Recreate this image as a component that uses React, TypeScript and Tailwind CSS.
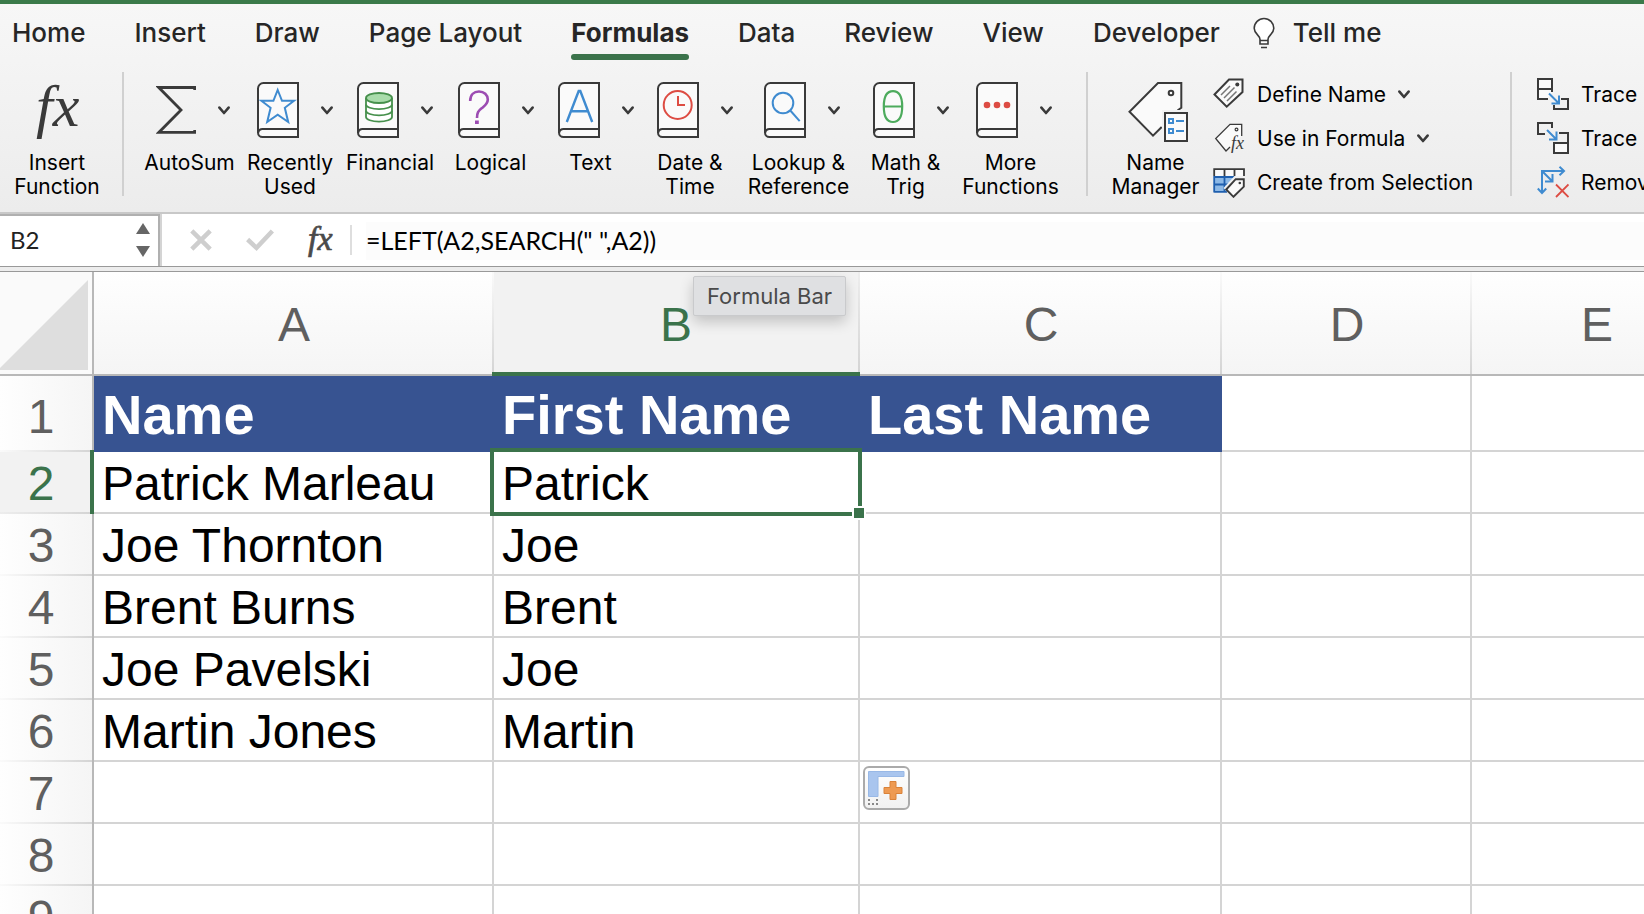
import type { ReactNode } from "react";

const tabs = ["Home", "Insert", "Draw", "Page Layout", "Formulas", "Data", "Review", "View", "Developer"];

function Chevron() {
  return (
    <svg width="12" height="9" viewBox="0 0 12 9" fill="none" stroke="#3a3a3a" strokeWidth="2.6" strokeLinecap="round" strokeLinejoin="round">
      <path d="M1.4 1.6 6 7 10.6 1.6" />
    </svg>
  );
}

function Book({ children }: { children: ReactNode }) {
  return (
    <svg width="42" height="56" viewBox="0 0 42 56" fill="none">
      <path d="M6.5 1H41V55H5.5A4.5 4.5 0 0 1 1 50.5V6.5A5.5 5.5 0 0 1 6.5 1Z" fill="#fafafa" stroke="#3a3a3a" strokeWidth="2" />
      <path d="M41 47H5.500A4.300 4.300 0 0 0 1.300 50.500" stroke="#3a3a3a" strokeWidth="2" />
      {children}
    </svg>
  );
}

const sigmaIcon = (
  <svg width="40" height="56" viewBox="0 0 40 56" fill="none" stroke="#3a3a3a" strokeWidth="2.8">
    <path d="M38.7 8V5.5H2.8L25 28 2.8 50.4H38.7V48" />
  </svg>
);

const starIcon = (
  <Book>
    <path d="M20.7 8 25 18.8H37L27.8 25.8 31.2 40 20.7 32.6 10.2 40 13.6 25.8 4.4 18.8H16.4Z" stroke="#3f8bd0" strokeWidth="2" />
  </Book>
);

const coinsIcon = (
  <Book>
    <path d="M9 16V35c0 2.600 5.800 4.600 13 4.600s13-2 13-4.600V16" fill="#fff" stroke="#46904c" strokeWidth="1.8" />
    <ellipse cx="22" cy="16" rx="13" ry="5" fill="#a9dcab" stroke="#46904c" strokeWidth="1.8" />
    <path d="M9 22.500c0 2.600 5.800 4.600 13 4.600s13-2 13-4.600M9 28.700c0 2.600 5.800 4.600 13 4.600s13-2 13-4.600" stroke="#46904c" strokeWidth="1.8" />
  </Book>
);

const questionIcon = (
  <Book>
    <path d="M12.200 19C12.200 12.500 16 9.500 21 9.500S29.800 12.800 29.800 17.600C29.800 22 27 23.500 23.600 26.300 20.300 29 19 30.500 19 36" stroke="#9c4cb2" strokeWidth="2.600" />
    <rect x="17" y="38.500" width="3.800" height="3.500" fill="#9c4cb2" />
  </Book>
);

const letterIcon = (
  <Book>
    <path d="M8.800 40 20.700 9H22.300L34.200 40M12.800 29.300H30.200" stroke="#3f8bd0" strokeWidth="2.400" />
  </Book>
);

const clockIcon = (
  <Book>
    <circle cx="20.700" cy="23" r="14" stroke="#dd4c43" strokeWidth="2" />
    <path d="M21 14V23H28" stroke="#dd4c43" strokeWidth="2" />
  </Book>
);

const lookupIcon = (
  <Book>
    <circle cx="19" cy="21" r="10.300" stroke="#3f8bd0" strokeWidth="2" />
    <path d="M26.300 28.500 35.700 39.200" stroke="#3f8bd0" strokeWidth="2" />
  </Book>
);

const thetaIcon = (
  <Book>
    <path d="M20 9.200C14.500 9.200 10.800 13.500 10.800 24.500S14.500 40 20 40 29.200 35.500 29.200 24.500 25.500 9.200 20 9.200ZM10.800 24.500H29.200" stroke="#4dab5d" strokeWidth="2.200" />
  </Book>
);

const dotsIcon = (
  <Book>
    <g fill="#dd4c43">
      <circle cx="11" cy="23" r="3.300" />
      <circle cx="21" cy="23" r="3.300" />
      <circle cx="31" cy="23" r="3.300" />
    </g>
  </Book>
);

const functionItems = [
  { lines: ["AutoSum"], width: "w-[101px]", pad: "pl-1.5", icon: sigmaIcon },
  { lines: ["Recently", "Used"], width: "w-[100px]", pad: "pl-[10px]", icon: starIcon },
  { lines: ["Financial"], width: "w-[100px]", pad: "pl-[10px]", icon: coinsIcon },
  { lines: ["Logical"], width: "w-[101px]", pad: "pl-[10px]", icon: questionIcon },
  { lines: ["Text"], width: "w-[99px]", pad: "pl-[10px]", icon: letterIcon },
  { lines: ["Date &", "Time"], width: "w-[100px]", pad: "pl-[10px]", icon: clockIcon },
  { lines: ["Lookup &", "Reference"], width: "w-[117px]", pad: "pl-1.5", icon: lookupIcon },
  { lines: ["Math &", "Trig"], width: "w-[97px]", pad: "pl-[10px]", icon: thetaIcon },
  { lines: ["More", "Functions"], width: "w-[113px]", pad: "pl-1.5", icon: dotsIcon },
];

function Label({ lines }: { lines: string[] }) {
  return (
    <span className="block h-12 text-center text-[21px] leading-6 whitespace-nowrap">
      {lines.map((line) => (
        <span key={line} className="block">
          {line}
        </span>
      ))}
    </span>
  );
}

function Divider() {
  return <div className="h-[124px] w-0.5 shrink-0 bg-[#d0d0d0]" />;
}

const nameManagerIcon = (
  <svg width="60" height="60" viewBox="0 0 60 60" fill="none">
    <path d="M1.500 29.700 30 1H53.300V29L25 53.500Z" fill="#fafafa" />
    <path d="M49.500 28.500 53.300 25.800V1H30L1.500 29.700 25 53.700 33.700 45" stroke="#3a3a3a" strokeWidth="2" />
    <circle cx="43" cy="11" r="2.300" stroke="#3a3a3a" strokeWidth="2" />
    <rect x="34" y="28" width="26" height="32" fill="#f1f1f1" />
    <rect x="37" y="31" width="22" height="28" fill="#fafafa" stroke="#3a3a3a" strokeWidth="2" />
    <path d="M41 37h4v4h-4zM41 47h4v4h-4zM48 39h8M48 49h8" stroke="#3f8bd0" strokeWidth="2" />
  </svg>
);

const defineNameIcon = (
  <svg width="32" height="32" viewBox="0 0 32 32" fill="none">
    <path d="M1.500 16.500 16 1.500H29.500V14L13.700 28.700Z" fill="#fafafa" stroke="#3a3a3a" strokeWidth="2" />
    <circle cx="24.300" cy="6.500" r="2" fill="#3a3a3a" />
    <path d="M8 17 17 8M11 20 21.500 9.500M14 23 23.500 13.500" stroke="#777" strokeWidth="1.500" />
  </svg>
);

const useInFormulaIcon = (
  <svg width="32" height="32" viewBox="0 0 32 32" fill="none">
    <path d="M28.700 14V2.300H17L2.700 16.500 13 29 17 25" fill="#fafafa" stroke="#3a3a3a" strokeWidth="1.300" />
    <circle cx="23.500" cy="7.500" r="1.400" stroke="#3a3a3a" strokeWidth="1.200" />
    <text x="18" y="27" fontFamily="Liberation Serif, serif" fontStyle="italic" fontSize="18" fill="#3a3a3a">
      fx
    </text>
  </svg>
);

const createIcon = (
  <svg width="32" height="32" viewBox="0 0 32 32" fill="none">
    <rect x="1" y="3" width="30" height="8" fill="#fafafa" />
    <rect x="1" y="11" width="22" height="15" fill="#8db9e6" />
    <path d="M1.200 11H24M1.200 18.500H16M1.200 25.800H14M1.200 10V26.500M11.500 10V26" stroke="#1f5fae" strokeWidth="1.800" />
    <path d="M1.200 10V3.200H31V10M11.500 3V10M21.500 3V10" stroke="#3a3a3a" strokeWidth="1.800" />
    <path d="M10.500 22 21.500 10H32V22L20 32Z" fill="#f1f1f1" />
    <path d="M13.200 23.500 22.700 13.200H30.800V20.700L20.500 30.800Z" fill="#fafafa" stroke="#3a3a3a" strokeWidth="1.900" />
    <circle cx="26.800" cy="17" r="1.300" fill="#3a3a3a" />
  </svg>
);

const precedentsIcon = (
  <svg width="32" height="32" viewBox="0 0 32 32" fill="none" strokeWidth="2">
    <path d="M1 1H15V15L11 20H1Z" fill="#fafafa" />
    <path d="M11 21H1V1H15V14M1 11H15M24 21H31V31H17V27" stroke="#3a3a3a" />
    <path d="M12 15.500 21.500 25M22 17.500V25.500H14.500" stroke="#3f8bd0" />
  </svg>
);

const dependentsIcon = (
  <svg width="32" height="32" viewBox="0 0 32 32" fill="none" strokeWidth="2">
    <path d="M17 21H31V31H17Z" fill="#fafafa" />
    <path d="M8 12H1V1H15V6M22 11H31V31H17V21H31" stroke="#3a3a3a" />
    <path d="M10 8 19 17M19.500 9.500V17.500H12" stroke="#3f8bd0" />
  </svg>
);

const removeIcon = (
  <svg width="32" height="32" viewBox="0 0 32 32" fill="none" strokeWidth="2">
    <path d="M5 27V5H27M22.500 .8 27 5 22.500 9.200M.8 22.500 5 27 9.200 22.500M6 6 15 15M15.500 8V15.500H8" stroke="#3f8bd0" />
    <path d="M19 18.500 31.500 31M31.500 18.500 19 31" stroke="#dd4c43" strokeWidth="1.800" />
  </svg>
);

function SmallItem({ icon, label, menu }: { icon: ReactNode; label: string; menu?: boolean }) {
  return (
    <button type="button" className="flex h-11 items-center gap-3 text-[21px] leading-6 whitespace-nowrap">
      {icon}
      <span className="pt-0.5">{label}</span>
      {menu && <Chevron />}
    </button>
  );
}

function Ribbon() {
  return (
    <div className="flex h-[140px] overflow-hidden text-black">
      <button type="button" className="flex w-[122px] shrink-0 flex-col items-center gap-[13px] pt-[10px] pr-[8px]">
        <svg width="56" height="56" viewBox="0 0 56 56" className="overflow-visible">
          <text x="7" y="44" fontFamily="Liberation Serif, serif" fontStyle="italic" fontSize="60" fill="#3a3a3a">
            fx
          </text>
        </svg>
        <Label lines={["Insert", "Function"]} />
      </button>
      <Divider />
      <div className="flex shrink-0 pr-[19px] pl-[15px]">
        {functionItems.map((item) => (
          <button key={item.lines[0]} type="button" className={`flex shrink-0 flex-col items-center gap-[13px] pt-[10px] ${item.width}`}>
            <span className={`flex items-center gap-[22px] ${item.pad}`}>
              {item.icon}
              <Chevron />
            </span>
            <Label lines={item.lines} />
          </button>
        ))}
      </div>
      <Divider />
      <button type="button" className="flex w-[125px] shrink-0 flex-col items-center gap-[13px] pt-[10px] pl-[10px]">
        <span className="flex h-14 items-start pl-1">{nameManagerIcon}</span>
        <Label lines={["Name", "Manager"]} />
      </button>
      <div className="flex w-[297px] shrink-0 flex-col items-start">
        <SmallItem icon={defineNameIcon} label="Define Name" menu />
        <SmallItem icon={useInFormulaIcon} label="Use in Formula" menu />
        <SmallItem icon={createIcon} label="Create from Selection" />
      </div>
      <Divider />
      <div className="flex shrink-0 flex-col items-start pl-[25px]">
        <SmallItem icon={precedentsIcon} label="Trace" />
        <SmallItem icon={dependentsIcon} label="Trace" />
        <SmallItem icon={removeIcon} label="Remove" />
      </div>
    </div>
  );
}

function Tabs() {
  return (
    <nav className="flex items-start gap-[49px] pt-[13px] pb-3 pl-3 text-[26px] leading-8 font-medium whitespace-nowrap text-[#262626]">
      {tabs.map((tab) => {
        const active = tab === "Formulas";
        return (
          <button key={tab} type="button" className={`flex flex-col gap-[5px] ${active ? "font-bold" : ""}`}>
            <span>{tab}</span>
            <span className={`h-1.5 w-full rounded-full ${active ? "bg-[#3b734b]" : ""}`} />
          </button>
        );
      })}
      <button type="button" className="-ml-4 flex items-center gap-[18px]">
        <svg width="22" height="32" viewBox="0 0 22 32" fill="none" stroke="#3a3a3a">
          <path d="M7 22.500C7 18 1.200 17 1.200 11.300A9.800 9.800 0 0 1 20.800 11.300C20.800 17 15 18 15 22.500V27H7Z" fill="#fff" strokeWidth="1.600" />
          <path d="M7 23.500H15M8 30.500H14" strokeWidth="1.600" />
        </svg>
        <span>Tell me</span>
      </button>
    </nav>
  );
}

function FormulaBar() {
  return (
    <div className="relative z-10 flex h-[60px] items-stretch border-t-2 border-b border-t-[#c8c8c8] border-b-[#999] bg-[#ededed] pb-1">
      <div className="flex w-full border-b border-[#999] bg-white">
        <div className="flex w-[160px] shrink-0 items-center justify-between border-t-2 border-r-2 border-[#b0b0b0] pr-2 pb-0.5 pl-[10px]">
          <input aria-label="Name Box" defaultValue="B2" className="w-24 bg-transparent font-[Lato,sans-serif] text-[24px] text-[#222] outline-none" />
          <div className="flex flex-col gap-3">
            <button type="button" aria-label="Previous name" className="block">
              <svg width="14" height="11" viewBox="0 0 14 11"><path d="M7 0 14 11H0Z" fill="#666" /></svg>
            </button>
            <button type="button" aria-label="Next name" className="block">
              <svg width="14" height="11" viewBox="0 0 14 11"><path d="M7 11 14 0H0Z" fill="#666" /></svg>
            </button>
          </div>
        </div>
        <div className="flex items-center border-l-2 border-[#d4d4d4] pl-7">
          <button type="button" aria-label="Cancel">
            <svg width="22" height="22" viewBox="0 0 22 22" fill="none" stroke="#cecece" strokeWidth="4.5"><path d="M1.800 1.800 20.200 20.200M20.200 1.800 1.800 20.200" /></svg>
          </button>
          <button type="button" aria-label="Enter" className="ml-[34px]">
            <svg width="28" height="22" viewBox="0 0 28 22" fill="none" stroke="#cecece" strokeWidth="4.5"><path d="M1.600 10.500 10.500 18.800 26.400 2" /></svg>
          </button>
          <button type="button" aria-label="Insert function" className="ml-7">
            <svg width="36" height="36" viewBox="0 0 36 36" className="overflow-visible">
              <text x="6" y="28" fontFamily="Liberation Serif, serif" fontStyle="italic" fontSize="34" fill="#4a4a4a" stroke="#4a4a4a" strokeWidth="0.7">fx</text>
            </svg>
          </button>
          <div className="ml-3 h-[30px] w-0.5 bg-[#dedede]" />
        </div>
        <input aria-label="Formula Bar" defaultValue={'=LEFT(A2,SEARCH(" ",A2))'} className="mt-2 mb-1.5 ml-[14px] min-w-0 flex-1 bg-[#fcfcfc] font-[Lato,sans-serif] text-[25px] text-black outline-none" />
      </div>
      <div role="tooltip" className="absolute top-[62px] left-[693px] flex h-[40px] items-center rounded-[2px] border border-[#c9cacc] bg-[#dfe0e2] px-[13px] text-[22px] whitespace-nowrap text-[#4a4a4a] shadow-[0_6px_14px_rgba(0,0,0,0.2)]">
        Formula Bar
      </div>
    </div>
  );
}

const rows = [
  ["Name", "First Name", "Last Name", "", ""],
  ["Patrick Marleau", "Patrick", "", "", ""],
  ["Joe Thornton", "Joe", "", "", ""],
  ["Brent Burns", "Brent", "", "", ""],
  ["Joe Pavelski", "Joe", "", "", ""],
  ["Martin Jones", "Martin", "", "", ""],
  ["", "", "", "", ""],
  ["", "", "", "", ""],
  ["", "", "", "", ""],
];

function Selection() {
  return (
    <div className="pointer-events-none absolute -inset-1 z-10 border-4 border-[#3b734b]">
      <span className="absolute -right-2 -bottom-2 h-3.5 w-3.5 border-2 border-white bg-[#3b734b]" />
    </div>
  );
}

function FillOptions() {
  return (
    <button type="button" aria-label="Auto fill options" className="absolute top-1 left-[3px] z-10 block">
      <svg width="47" height="44" viewBox="0 0 47 44" fill="none">
        <defs>
          <linearGradient id="fillFace" x1="0" y1="0" x2="0" y2="1">
            <stop offset="0" stopColor="#fff" />
            <stop offset="1" stopColor="#f1f1f1" />
          </linearGradient>
        </defs>
        <rect x="1" y="1" width="45" height="42" rx="5" fill="url(#fillFace)" stroke="#aaa" strokeWidth="2" />
        <path d="M5.500 5.500H41V10.500H15V30.500H5.500Z" fill="#a9c5ee" stroke="#98b8e6" />
        <path d="M27 15.500H33V21.500H39V27.500H33V33.500H27V27.500H21V21.500H27Z" fill="#ee9a52" stroke="#d9823a" />
        <path d="M5 33h2v2H5zM13 33h2v2h-2zM5 37h2v2H5zM9 37h2v2H9zM13 37h2v2h-2z" fill="#888" />
      </svg>
    </button>
  );
}

function Sheet() {
  return (
    <div className="min-h-0 flex-1 overflow-hidden bg-white">
      <table className="w-[1722px] table-fixed border-separate border-spacing-0 font-['Liberation_Sans',Arial,sans-serif] text-[48px] leading-none whitespace-nowrap">
        <colgroup>
          <col className="w-[94px]" />
          <col className="w-[400px]" />
          <col className="w-[366px]" />
          <col className="w-[362px]" />
          <col className="w-[250px]" />
          <col className="w-[250px]" />
        </colgroup>
        <thead>
          <tr>
            <th className="h-[104px] border-r-2 border-b-2 border-[#b8b8b8] bg-[#fafafa] p-0 align-top">
              <svg width="88" height="98" viewBox="0 0 88 98" className="block">
                <path d="M88 8V98H0V96Z" fill="#dedede" />
              </svg>
            </th>
            {["A", "B", "C", "D", "E"].map((letter) =>
              letter === "B" ? (
                <th key={letter} scope="col" className="relative border-b-2 border-[#b8b8b8] bg-[linear-gradient(#ededed,#d4d4d4),linear-gradient(#f2f2f2,#f2f2f2)] bg-[length:2px_100%,100%_100%] bg-[position:right,left] bg-no-repeat p-0 pt-1 pr-0.5 font-normal text-[#3b734b]">
                  B
                  <span className="absolute -bottom-0.5 -left-0.5 right-0 h-1 bg-[#3b734b]" />
                </th>
              ) : (
                <th key={letter} scope="col" className="border-b-2 border-[#b8b8b8] bg-[linear-gradient(#fafafa,#d4d4d4),linear-gradient(#fefefe,#f5f5f5)] bg-[length:2px_100%,100%_100%] bg-[position:right,left] bg-no-repeat p-0 pt-1 font-normal text-[#5f5f5f]">
                  {letter}
                </th>
              ),
            )}
          </tr>
        </thead>
        <tbody>
          {rows.map((cells, r) => {
            const heading = r === 0;
            const active = r === 1;
            return (
              <tr key={r} className={heading ? "h-[76px]" : "h-[62px]"}>
                <th
                  scope="row"
                  className={`relative border-r-2 border-[#b8b8b8] bg-[length:100%_2px,100%_100%] bg-[position:bottom,top] bg-no-repeat p-0 pr-[10px] pb-0.5 font-normal ${
                    heading ? "pt-2" : "pt-1"
                  } ${
                    active
                      ? "bg-[linear-gradient(to_right,#ededed,#d4d4d4),linear-gradient(#f2f2f2,#f2f2f2)] text-[#3b734b]"
                      : "bg-[linear-gradient(to_right,#fafafa,#d4d4d4),linear-gradient(to_right,#fefefe,#f5f5f5)] text-[#5f5f5f]"
                  }`}
                >
                  {r + 1}
                  {active && <span className="absolute -top-0.5 -right-0.5 bottom-0 w-1 bg-[#3b734b]" />}
                </th>
                {cells.map((value, c) => (
                  <td
                    key={c}
                    className={`relative border-r-2 border-b-2 p-0 pt-1 pl-2 ${
                      heading && c < 3 ? "border-[#375391] bg-[#375391] text-[56px] font-bold text-white" : "border-[#d4d4d4] text-black"
                    }`}
                  >
                    {value}
                    {active && c === 1 && <Selection />}
                    {r === 6 && c === 2 && <FillOptions />}
                  </td>
                ))}
              </tr>
            );
          })}
        </tbody>
      </table>
    </div>
  );
}

export default function App() {
  return (
    <div className="flex h-screen flex-col overflow-hidden bg-white font-[Inter,sans-serif]">
      <header className="border-t-4 border-[#3b7a4a] bg-linear-to-b from-[#f7f7f7] to-[#ececec]">
        <Tabs />
        <Ribbon />
      </header>
      <FormulaBar />
      <Sheet />
    </div>
  );
}
